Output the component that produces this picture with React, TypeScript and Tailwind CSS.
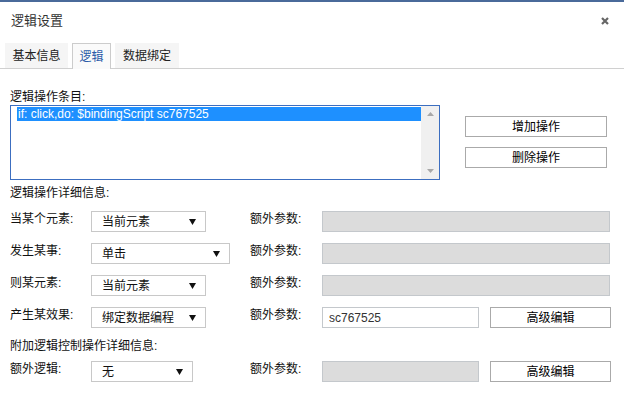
import React from "react";

const Select = ({ value, width }: { value: string; width: string }) => (
  <div
    className={`${width} h-[21px] border border-[#c8c8c8] bg-white flex items-end pb-[1px] pl-[10px] pr-[9px] justify-between`}
  >
    <span className="leading-[16px]">{value}</span>
    <svg width="7" height="6" viewBox="0 0 7 6" className="mb-[5px]">
      <path d="M0 0H7L3.5 6Z" fill="#111" />
    </svg>
  </div>
);

const Button = ({ label, width }: { label: string; width: string }) => (
  <div
    className={`${width} h-[21px] border border-[#aaaaaa] bg-white flex items-center justify-center text-black`}
  >
    {label}
  </div>
);

const rows = [
  { label: "当某个元素:", value: "当前元素", width: "w-[115px]" },
  { label: "发生某事:", value: "单击", width: "w-[139px]" },
  { label: "则某元素:", value: "当前元素", width: "w-[115px]" },
];

const App = () => {
  return (
    <div
      className="w-[624px] h-[396px] bg-white border-t-2 border-[#4a6a9a] overflow-hidden text-[12px] text-[#111]"
      style={{ fontFamily: '"Liberation Sans", "Noto Sans CJK SC", sans-serif' }}
    >
      {/* header */}
      <div className="h-[38px] flex items-center justify-between pl-[11px] pr-[15px]">
        <span className="text-[13px] text-[#333]">逻辑设置</span>
        <svg width="8" height="8" viewBox="0 0 8 8">
          <path d="M1 1L7 7M7 1L1 7" stroke="#666" strokeWidth="2.2" />
        </svg>
      </div>

      {/* tabs */}
      <div className="h-[27px] flex items-end gap-[4px] pl-[5px] border-b border-[#d0d0d0] mt-[2px]">
        <div className="h-[25px] w-[63px] bg-[#f5f5f5] flex items-center justify-center text-[#222]">
          基本信息
        </div>
        <div className="h-[26px] w-[39px] bg-[#fafafa] border border-b-0 border-[#cccccc] flex items-center justify-center text-[#2a5ba8] -mb-px">
          逻辑
        </div>
        <div className="h-[25px] w-[64px] bg-[#f5f5f5] flex items-center justify-center text-[#222]">
          数据绑定
        </div>
      </div>

      <div className="px-[10px]">
        <div className="mt-[20px] leading-[16px]">逻辑操作条目:</div>

        <div className="flex">
          <div className="w-[430px] h-[75px] border border-[#3c6ec0] flex">
            <div className="flex-1 pt-[1px] pl-[6px]">
              <div className="h-[14px] bg-[#1e90ff] text-white leading-[14px] pl-px">
                if: click,do: $bindingScript sc767525
              </div>
            </div>
            <div className="w-[18px] bg-[#f0f0f0] flex flex-col items-center justify-between py-[6px]">
              <svg width="7" height="4" viewBox="0 0 7 4">
                <path d="M3.5 0L7 4H0Z" fill="#a8a8a8" />
              </svg>
              <svg width="7" height="4" viewBox="0 0 7 4">
                <path d="M0 0H7L3.5 4Z" fill="#a8a8a8" />
              </svg>
            </div>
          </div>
          <div className="ml-[25px] pt-[11px] flex flex-col gap-[10px]">
            <Button label="增加操作" width="w-[142px]" />
            <Button label="删除操作" width="w-[142px]" />
          </div>
        </div>

        <div className="mt-[5px] leading-[16px]">逻辑操作详细信息:</div>

        <div className="mt-[10px] flex flex-col gap-[11px]">
          {rows.map((r) => (
            <div key={r.label} className="flex h-[21px]">
              <div className="w-[81px] leading-[16px]">{r.label}</div>
              <div className="w-[159px]">
                <Select value={r.value} width={r.width} />
              </div>
              <div className="w-[72px] leading-[16px]">额外参数:</div>
              <div className="w-[288px] h-[21px] bg-[#dcdcdc] border border-[#c4c8cc]" />
            </div>
          ))}
          <div className="flex h-[21px]">
            <div className="w-[81px] leading-[16px]">产生某效果:</div>
            <div className="w-[159px]">
              <Select value="绑定数据编程" width="w-[115px]" />
            </div>
            <div className="w-[72px] leading-[16px]">额外参数:</div>
            <div className="w-[157px] h-[21px] bg-white border border-[#c4c8cc] flex items-center pl-[6px] text-[#333]">
              sc767525
            </div>
            <div className="ml-[11px]">
              <Button label="高级编辑" width="w-[121px]" />
            </div>
          </div>
        </div>

        <div className="mt-[10px] leading-[16px]">附加逻辑控制操作详细信息:</div>

        <div className="mt-[7px] flex h-[21px]">
          <div className="w-[81px] leading-[16px]">额外逻辑:</div>
          <div className="w-[159px]">
            <Select value="无" width="w-[102px]" />
          </div>
          <div className="w-[72px] leading-[16px]">额外参数:</div>
          <div className="w-[157px] h-[21px] bg-[#dcdcdc] border border-[#c4c8cc]" />
          <div className="ml-[11px]">
            <Button label="高级编辑" width="w-[121px]" />
          </div>
        </div>
      </div>
    </div>
  );
};

export default App;
